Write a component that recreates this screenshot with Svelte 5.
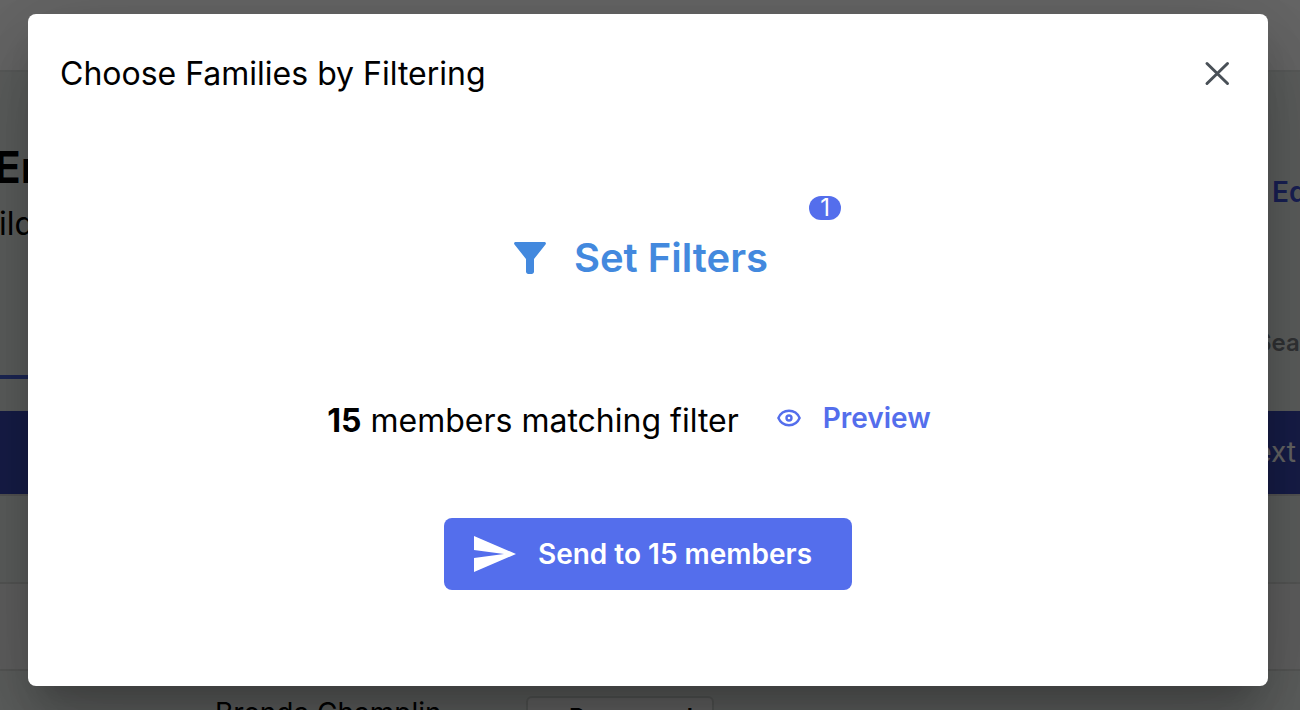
<script lang="ts">
	export let members = 15;
	export let activeFilters = 1;

	let open = true;
</script>

<div class="screen">
	<div class="page" aria-hidden="true">
		<div class="topbar"></div>
		<div class="hero">
			<div class="hero-text">
				<div class="hero-title">En</div>
				<div class="hero-sub">hild</div>
				<div class="tab"></div>
			</div>
			<div class="hero-side">
				<span class="edit">Edit</span>
				<span class="search">Search</span>
			</div>
		</div>
		<div class="banner">Next</div>
		<div class="row"></div>
		<div class="row plain"></div>
		<div class="row last">
			<span class="name">Brenda Champlin</span>
			<span class="chip">Requested</span>
		</div>
	</div>

	{#if open}
		<div class="overlay">
			<div class="dialog" role="dialog" aria-modal="true" aria-labelledby="dialog-title">
				<header>
					<h2 id="dialog-title">Choose Families by Filtering</h2>
					<button class="close" aria-label="Close" on:click={() => (open = false)}>
						<svg width="26" height="26" viewBox="0 0 26 26" fill="none" stroke="currentColor" stroke-width="3" stroke-linecap="round">
							<path d="M3 2.500 23.500 22.500M23.500 2.500 3 22.500" />
						</svg>
					</button>
				</header>

				<button class="filters">
					<svg width="32" height="32" viewBox="0 0 32 32" fill="currentColor" aria-hidden="true">
						<path d="M1.600 0H30.400C31.800 0 32.400 1.500 31.500 2.600L20 17V29.600C20 31.200 19 32 17.600 32H14.400C13 32 12 31.200 12 29.600V17L.500 2.600C-.400 1.500 .200 0 1.600 0Z" />
					</svg>
					Set Filters
					<span class="badge">{activeFilters}</span>
				</button>

				<div class="summary">
					<p><strong>{members}</strong> members matching filter</p>
					<button class="preview">
						<svg width="24" height="18" viewBox="0 0 24 18" fill="none" stroke="currentColor" stroke-width="2.4" aria-hidden="true">
							<path d="M1.400 9C3.400 4.400 7.400 1.800 12 1.800S20.600 4.400 22.600 9C20.600 13.600 16.600 16.200 12 16.200S3.400 13.600 1.400 9Z" />
							<circle cx="12" cy="9" r="2.500" />
						</svg>
						Preview
					</button>
				</div>

				<button class="send">
					<svg width="42" height="36" viewBox="0 0 42 36" fill="currentColor" aria-hidden="true">
						<path d="M0 0 42 18 0 36V22L30 18 0 14Z" />
					</svg>
					Send to {members} members
				</button>
			</div>
		</div>
	{/if}
</div>

<style>
	:global(body) {
		margin: 0;
	}
	.screen {
		position: relative;
		height: 100vh;
		overflow: hidden;
		font-family: Inter, 'Liberation Sans', sans-serif;
		color: #000;
	}
	.page {
		background: #e9eeeb;
	}
	.topbar {
		height: 70px;
		background: #fff;
		border-bottom: 2px solid #dfe3e2;
	}
	.hero {
		display: flex;
		justify-content: space-between;
		height: 339px;
	}
	.hero-text {
		width: 200px;
		padding-top: 68px;
	}
	.hero-title {
		margin-left: -6px;
		font-size: 44px;
		line-height: 54px;
		font-weight: 700;
	}
	.hero-sub {
		margin-left: -20px;
		font-size: 32px;
		line-height: 60px;
	}
	.tab {
		margin-top: 121px;
		border-top: 4px solid #4a62d8;
	}
	.hero-side {
		display: flex;
		flex-direction: column;
		width: 40px;
		padding-top: 100px;
		white-space: nowrap;
		font-weight: 600;
	}
	.edit {
		padding-left: 12px;
		font-size: 28px;
		line-height: 40px;
		color: #3f51d5;
	}
	.search {
		margin-top: 115px;
		margin-left: -4px;
		font-size: 24px;
		line-height: 32px;
		color: #7c8084;
	}
	.banner {
		height: 83px;
		padding-right: 4px;
		background: #3a49b4;
		border-bottom: 2px solid #d3d3d3;
		color: #fff;
		font-size: 28px;
		line-height: 83px;
		text-align: right;
	}
	.row {
		height: 86px;
		border-bottom: 2px solid #d6dad8;
	}
	.plain {
		height: 85px;
		background: #f1f1f1;
	}
	.last {
		display: flex;
		align-items: flex-start;
		padding: 25px 0 0 215px;
		border: 0;
	}
	.name {
		width: 311px;
		font-size: 28px;
		line-height: 34px;
	}
	.chip {
		box-sizing: border-box;
		width: 188px;
		padding-left: 22px;
		border: 2px solid #cfd4d2;
		border-radius: 6px;
		background: #f8f8f8;
		font-size: 24px;
		line-height: 40px;
		font-weight: 600;
		text-align: center;
	}
	.overlay {
		position: absolute;
		inset: 0;
		box-sizing: border-box;
		padding: 14px 32px 24px 28px;
		background: rgba(0, 0, 0, 0.6);
	}
	.dialog {
		display: flex;
		flex-direction: column;
		align-items: center;
		box-sizing: border-box;
		height: 100%;
		border-radius: 8px;
		background: #fff;
		box-shadow:
			0 22px 30px -14px rgba(0, 0, 0, 0.2),
			0 48px 76px 6px rgba(0, 0, 0, 0.14),
			0 18px 92px 16px rgba(0, 0, 0, 0.12);
	}
	header {
		display: flex;
		align-items: center;
		justify-content: space-between;
		align-self: stretch;
		padding: 36px 32px 0;
	}
	h2 {
		margin: 0;
		font-size: 32px;
		line-height: 48px;
		font-weight: 400;
	}
	button {
		display: flex;
		align-items: center;
		padding: 0;
		border: 0;
		background: none;
		font-family: inherit;
		font-weight: 600;
		cursor: pointer;
	}
	.close {
		padding: 6px;
		color: #495057;
	}
	.filters {
		position: relative;
		gap: 28px;
		margin-top: 124px;
		margin-right: 14px;
		color: #4389de;
		font-size: 40px;
		line-height: 72px;
	}
	.badge {
		position: absolute;
		top: -26px;
		right: -73px;
		width: 32px;
		border-radius: 12px;
		background: #546eec;
		color: #fff;
		font-size: 24px;
		line-height: 24px;
		font-weight: 400;
		text-align: center;
	}
	.summary {
		display: flex;
		align-items: center;
		gap: 38px;
		margin-top: 102px;
		margin-right: 38px;
	}
	p {
		margin: 0;
		font-size: 32px;
		line-height: 50px;
	}
	strong {
		font-weight: 700;
	}
	.preview {
		gap: 22px;
		padding-bottom: 6px;
		color: #546eec;
		font-size: 28px;
		line-height: 40px;
	}
	.send {
		gap: 22px;
		margin-top: 72px;
		padding: 0 40px 0 30px;
		border-radius: 8px;
		background: #546eec;
		color: #fff;
		font-size: 28px;
		line-height: 72px;
	}
</style>
